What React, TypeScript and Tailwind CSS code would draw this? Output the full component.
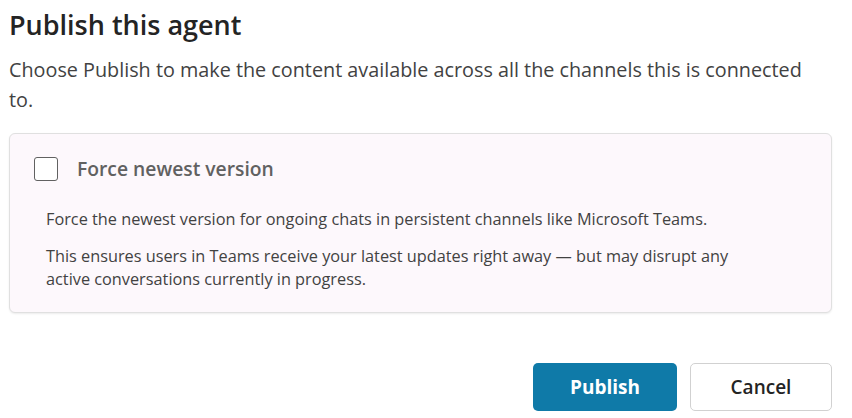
export default function App() {
  const font = { fontFamily: '"Open Sans", "Noto Sans", sans-serif' };
  return (
    <div
      className="w-[852px] h-[418px] bg-white pl-[9px] pr-[20px] pt-[9px] text-[#242424]"
      style={font}
    >
      <h1 className="text-[27px] leading-[32px] font-semibold text-[#242424]">
        Publish this agent
      </h1>

      <p className="mt-[14px] text-[19.8px] leading-[30px] text-[#424242]">
        Choose Publish to make the content available across all the channels this is connected
        <br />
        to.
      </p>

      <div className="mt-[18px] h-[180px] rounded-[6px] border border-[#e0e0e0] bg-[#fdf8fc] pl-[24px] pt-[23px] shadow-[0_1px_2px_rgba(0,0,0,0.08)]">
        <label className="flex items-center gap-[19px]">
          <span className="block h-[24px] w-[24px] rounded-[3px] border-[1.5px] border-[#616161] bg-white" />
          <span className="text-[19.3px] leading-[24px] font-semibold text-[#616161]">
            Force newest version
          </span>
        </label>

        <div className="ml-[12px] mt-[27px] text-[16.3px] leading-[23px] text-[#424242]">
          <p>Force the newest version for ongoing chats in persistent channels like Microsoft Teams.</p>
          <p className="mt-[14px]">
            This ensures users in Teams receive your latest updates right away — but may disrupt any
            <br />
            active conversations currently in progress.
          </p>
        </div>
      </div>

      <div className="mt-[50px] flex justify-end gap-[13px]">
        <button className="h-[48px] w-[144px] rounded-[5px] bg-[#0f7aa8] text-[19px] font-bold text-white">
          Publish
        </button>
        <button className="h-[48px] w-[142px] rounded-[5px] border border-[#d1d1d1] bg-white text-[19px] font-semibold text-[#242424]">
          Cancel
        </button>
      </div>
    </div>
  );
}
